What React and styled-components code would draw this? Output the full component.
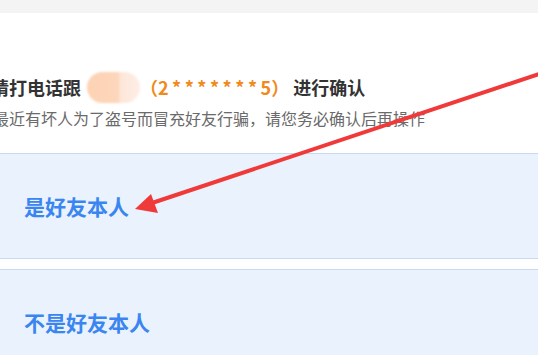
import React from "react";
import styled, { createGlobalStyle } from "styled-components";

const GlobalStyle = createGlobalStyle`
  html, body {
    margin: 0;
    padding: 0;
    background: #ffffff;
    font-family: "Noto Sans CJK SC", "Noto Sans", sans-serif;
  }
`;

const Page = styled.div`
  position: relative;
  width: 538px;
  height: 355px;
  overflow: hidden;
  background: #ffffff;
`;

const TopBar = styled.div`
  height: 13px;
  background: #f4f4f4;
`;

const Notice = styled.div`
  padding-top: 62px;
  margin-left: -9px;
`;

const Title = styled.div`
  display: flex;
  align-items: center;
  height: 24px;
  font-size: 18px;
  font-weight: 700;
  color: #333333;
  white-space: nowrap;
`;

const BlurName = styled.span`
  display: inline-block;
  flex: none;
  width: 53px;
  height: 31px;
  margin: 0 0 0 6px;
  border-radius: 16px;
  background: linear-gradient(90deg, #fdd2b4 0%, #fdd6bb 60%, #fde6d8 62%, #feeee6 100%);
  filter: blur(1px);
`;

const Phone = styled.span`
  color: #f08a1c;
  margin-right: 4px;
`;

const Digits = styled.span`
  letter-spacing: 3.5px;
`;

const Sub = styled.div`
  margin-top: 8px;
  margin-left: 2px;
  height: 22px;
  line-height: 22px;
  font-size: 16px;
  color: #6a6a6a;
  white-space: nowrap;
`;

const Options = styled.div`
  margin-top: 24px;
  display: flex;
  flex-direction: column;
  gap: 10px;
`;

const Option = styled.div`
  height: 104px;
  display: flex;
  align-items: center;
  padding-left: 24px;
  background: #eaf2fd;
  border-top: 1px solid #c6dbf0;
  border-bottom: 1px solid #c6dbf0;
  font-size: 21px;
  font-weight: 700;
  color: #3a86f0;
`;

const Arrow = styled.svg`
  position: absolute;
  left: 0;
  top: 0;
  pointer-events: none;
`;

const App = () => {
  return (
    <>
      <GlobalStyle />
      <Page>
        <TopBar />
        <Notice>
          <Title>
            请打电话跟
            <BlurName />
            <Phone>
              （<Digits>2*******</Digits>5）
            </Phone>
            进行确认
          </Title>
          <Sub>最近有坏人为了盗号而冒充好友行骗，请您务必确认后再操作</Sub>
        </Notice>
        <Options>
          <Option>是好友本人</Option>
          <Option>不是好友本人</Option>
        </Options>
        {/* 红色标注箭头 */}
        <Arrow width="538" height="355" viewBox="0 0 538 355">
          <line x1="545" y1="72" x2="152" y2="203" stroke="#f03a3a" strokeWidth="4" strokeLinecap="round" />
          <polygon points="135,209 151,194 158,213" fill="#f03a3a" />
        </Arrow>
      </Page>
    </>
  );
};

export default App;
